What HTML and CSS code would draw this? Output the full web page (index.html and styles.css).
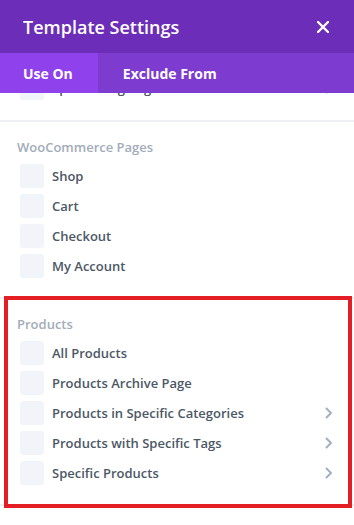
FILE: index.html
```html
<!DOCTYPE html>
<html>
<head>
  <title>Template Settings</title>
  <link rel="stylesheet" href="styles.css">
</head>
<body>
  <div class="panel">
    <header class="panel-header">
      <h2>Template Settings</h2>
      <button class="close" type="button" aria-label="Close">
        <svg width="12" height="12" viewBox="0 0 12 12"><path d="M1 1L11 11M11 1L1 11" stroke="#fff" stroke-width="2.4" stroke-linecap="round"/></svg>
      </button>
    </header>

    <nav class="tabs">
      <span class="tab active">Use On</span>
      <span class="tab">Exclude From</span>
    </nav>

    <div class="panel-body">
      <div class="scroll">
        <section class="group first">
          <label class="option">
            <span class="check"></span>
            <span class="option-label">Specific Tag Pages</span>
            <svg class="chevron" width="8" height="12" viewBox="0 0 8 12"><path d="M1.5 1.5L6 6L1.5 10.5" fill="none" stroke="#a3b0c2" stroke-width="2" stroke-linecap="round" stroke-linejoin="round"/></svg>
          </label>
        </section>

        <section class="group">
          <h3 class="group-title">WooCommerce Pages</h3>
          <label class="option"><span class="check"></span><span class="option-label">Shop</span></label>
          <label class="option"><span class="check"></span><span class="option-label">Cart</span></label>
          <label class="option"><span class="check"></span><span class="option-label">Checkout</span></label>
          <label class="option"><span class="check"></span><span class="option-label">My Account</span></label>
        </section>

        <section class="group highlight">
          <h3 class="group-title">Products</h3>
          <label class="option"><span class="check"></span><span class="option-label">All Products</span></label>
          <label class="option"><span class="check"></span><span class="option-label">Products Archive Page</span></label>
          <label class="option">
            <span class="check"></span>
            <span class="option-label">Products in Specific Categories</span>
            <svg class="chevron" width="8" height="12" viewBox="0 0 8 12"><path d="M1.5 1.5L6 6L1.5 10.5" fill="none" stroke="#a3b0c2" stroke-width="2" stroke-linecap="round" stroke-linejoin="round"/></svg>
          </label>
          <label class="option">
            <span class="check"></span>
            <span class="option-label">Products with Specific Tags</span>
            <svg class="chevron" width="8" height="12" viewBox="0 0 8 12"><path d="M1.5 1.5L6 6L1.5 10.5" fill="none" stroke="#a3b0c2" stroke-width="2" stroke-linecap="round" stroke-linejoin="round"/></svg>
          </label>
          <label class="option">
            <span class="check"></span>
            <span class="option-label">Specific Products</span>
            <svg class="chevron" width="8" height="12" viewBox="0 0 8 12"><path d="M1.5 1.5L6 6L1.5 10.5" fill="none" stroke="#a3b0c2" stroke-width="2" stroke-linecap="round" stroke-linejoin="round"/></svg>
          </label>
        </section>
      </div>
    </div>
  </div>
</body>
</html>
```

FILE: styles.css
```css
body {
  font-family: "Open Sans", Arial, sans-serif;
  margin: 0;
  background-color: #fff;
}

.panel {
  width: 354px;
  height: 525px;
  display: flex;
  flex-direction: column;
  overflow: hidden;
}

.panel-header {
  height: 53px;
  display: flex;
  align-items: center;
  justify-content: space-between;
  padding: 0 23px;
  background-color: #6c2eb9;
}

.panel-header h2 {
  margin: 0;
  color: #fff;
  font-size: 18px;
  font-weight: 600;
}

.close {
  display: flex;
  padding: 0;
  margin-right: 2px;
  border: none;
  background: none;
  cursor: pointer;
}

.tabs {
  height: 40px;
  display: flex;
  background-color: #7e3bd0;
}

.tab {
  display: flex;
  align-items: center;
  padding: 0 25px;
  color: #fff;
  font-size: 14px;
  font-weight: 700;
}

.tab:first-child {
  padding-left: 23px;
}

.tab.active {
  background-color: #8f42ec;
}

.panel-body {
  flex: 1;
  overflow: hidden;
}

.group {
  padding: 16px 0 19px;
  border-bottom: 2px solid #eef0f3;
}

.group.first {
  margin-top: -17px;
  padding: 0 0 20px;
}

.group-title {
  margin: 0 0 8px;
  padding-left: 17px;
  color: #a3acb9;
  font-size: 13px;
  font-weight: 600;
  line-height: 18px;
}

.option {
  height: 24px;
  display: flex;
  align-items: center;
  padding: 0 21px 0 20px;
  margin-bottom: 6px;
  cursor: pointer;
}

.option:last-child {
  margin-bottom: 0;
}

.check {
  width: 24px;
  height: 24px;
  margin-right: 8px;
  border-radius: 3px;
  background-color: #f1f4f8;
}

.option-label {
  color: #4c5866;
  font-size: 13px;
  font-weight: 600;
}

.chevron {
  margin-left: auto;
}

/* annotation frame */
.highlight {
  position: relative;
}

.highlight::after {
  content: '';
  position: absolute;
  top: -3px;
  left: 4px;
  right: 2px;
  bottom: -4px;
  border: 4px solid #e31e24;
  pointer-events: none;
}
```
